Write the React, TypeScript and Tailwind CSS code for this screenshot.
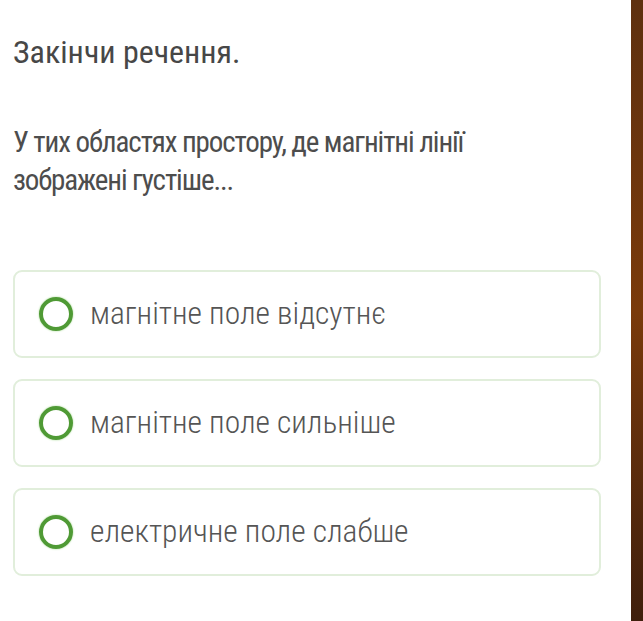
import React from 'react';

const options = ['магнітне поле відсутнє', 'магнітне поле сильніше', 'електричне поле слабше'];

const App: React.FC = () => {
  return (
    <div
      className="flex h-[621px] w-[643px] overflow-hidden bg-white"
      style={{ fontFamily: '"Roboto Condensed", "Liberation Sans Narrow", "DejaVu Sans Condensed", Roboto, sans-serif' }}
    >
      <div className="flex-1 pl-[13px] pr-[30px] pt-[32px]">
        <h1 className="text-[32px] leading-[40px] text-[#474747] [font-stretch:condensed]">Закінчи речення.</h1>
        <p className="mt-[51px] max-w-[490px] text-[29px] leading-[38px] tracking-[-1.1px] text-[#4d4d4d] [font-stretch:condensed]">
          У тих областях простору, де магнітні лінії зображені густіше...
        </p>
        <div className="mt-[71px] flex flex-col gap-[21px]">
          {options.map((opt) => (
            <div
              key={opt}
              className="flex h-[88px] items-center rounded-[9px] border-2 border-[#e1eedb] pl-[24px]"
            >
              <span className="h-[34px] w-[34px] shrink-0 rounded-full border-[4px] border-[#4f9a35] shadow-[0_0_2px_#9fd68a]" />
              <span className="ml-[17px] text-[31.5px] font-light text-[#555555] [font-stretch:condensed]">{opt}</span>
            </div>
          ))}
        </div>
      </div>
      <div className="w-[12px] bg-gradient-to-b from-[#5e300f] via-[#7a3a0a] to-[#3f1f0c]" />
    </div>
  );
};

export default App;
